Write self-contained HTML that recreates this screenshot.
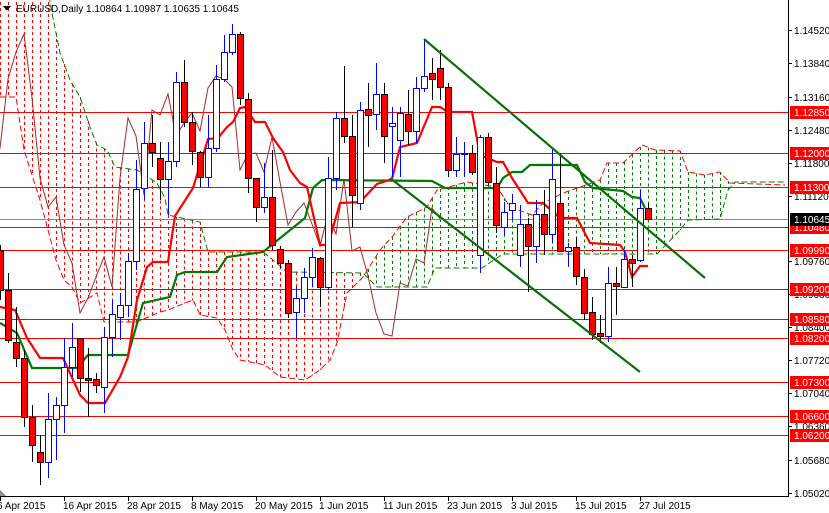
<!DOCTYPE html>
<html><head><meta charset="utf-8">
<style>
html,body{margin:0;padding:0;background:#fff;}
body{width:829px;height:513px;overflow:hidden;position:relative;font-family:"Liberation Sans",sans-serif;}
svg{position:absolute;left:0;top:0;}
text{font-family:"Liberation Sans",sans-serif;font-size:10px;}
</style></head><body>
<svg id="s" width="829" height="513" viewBox="0 0 829 513" xmlns="http://www.w3.org/2000/svg" shape-rendering="crispEdges">
<g id="cloud"></g>
<g id="hl"></g>
<g id="lines" shape-rendering="auto"></g>
<g id="candles"></g>
<g id="trend" shape-rendering="auto"></g>
<rect x="789" y="0" width="40" height="513" fill="#fff"/>
<rect x="0" y="497" width="829" height="16" fill="#fff"/>
<line x1="788.5" y1="0" x2="788.5" y2="497" stroke="#000"/>
<line x1="0" y1="496.5" x2="789" y2="496.5" stroke="#000"/>
<g id="axis"></g>
<polygon points="0,490 6,496 0,496" fill="#8a8f99"/>
<polygon points="3,6 11,6 7,11" fill="#000"/>
<text x="16" y="12" font-size="10.5" fill="#000">EURUSD,Daily  1.10864 1.10987 1.10635 1.10645</text>
</svg>
<script>
var NS="http://www.w3.org/2000/svg";
function el(p,t,a,txt){var e=document.createElementNS(NS,t);for(var k in a)e.setAttribute(k,a[k]);if(txt!==undefined)e.textContent=txt;document.getElementById(p).appendChild(e);return e;}
function pts(a){return a.map(function(p){return p[0]+","+p[1]}).join(" ");}
function interp(a,x){if(x<=a[0][0])return a[0][1];for(var i=1;i<a.length;i++){if(x<=a[i][0]){var t=(x-a[i-1][0])/(a[i][0]-a[i-1][0]);return a[i-1][1]+t*(a[i][1]-a[i-1][1]);}}return a[a.length-1][1];}
// candles: [open,close,high,low] in y pixels
var C=[[250,290,245,300],[290,340,273,343],[342,358,307,367],[358,417,350,427],[417,445,405,462],[452,462,435,485],[462,419,393,478],[419,405,397,460],[405,367,338,433],[367,347,323,377],
[338,378,338,392],[378,380,348,417],[379,385,373,393],[387,337,327,413],[337,314,300,357],[317,305,293,340],[305,261,253,317],[261,189,160,270],[188,143,122,200],[143,152,115,167],
[158,179,142,200],[179,161,142,215],[161,82,72,167],[82,122,60,127],[122,151,112,165],[152,177,151,187],[177,148,115,187],[148,79,65,152],[79,52,35,82],[52,34,24,55],
[34,98,32,105],[99,178,93,193],[178,207,178,222],[207,197,163,213],[197,245,150,250],[249,263,246,268],[263,313,260,318],[312,298,287,338],[298,277,268,313],[277,257,248,287],
[258,287,257,307],[287,178,157,290],[178,118,112,190],[118,136,66,143],[136,195,115,227],[203,110,102,210],[109,115,83,147],[114,94,63,130],[94,136,83,163],[126,123,107,177],
[140,113,107,177],[114,131,90,145],[131,88,77,143],[88,76,39,92],[73,79,58,100],[68,87,50,100],[87,170,83,177],[170,154,137,177],[154,153,142,177],[153,172,145,175],
[255,137,135,273],[137,182,133,185],[183,225,167,233],[227,212,202,235],[210,203,194,220],[255,224,205,267],[224,246,218,292],[246,214,200,263],[214,234,190,255],[234,179,148,243],
[203,251,153,251],[251,247,243,267],[247,276,237,285],[277,313,269,320],[312,334,297,340],[333,336,315,343],[336,283,267,342],[283,286,267,315],[287,259,250,288],[259,263,255,287],
[260,208,190,262],[208,219,203,220]];
// span A (red thin) and span B (green thin)
var A=[[0,97],[16,97],[24,150],[40,200],[56,260],[64,280],[72,287],[80,303],[97,293],[104,322],[137,322],[160,312],[168,310],[185,303],[193,300],[200,315],[217,318],[225,330],[233,350],[240,360],[265,365],[280,377],[305,380],[320,370],[330,360],[337,343],[347,293],[363,277],[380,250],[392,237],[407,217],[427,207],[437,190],[467,182],[497,187],[510,207],[532,215],[543,203],[563,193],[600,180],[607,163],[623,163],[642,145],[655,150],[680,151],[688,172],[705,175],[720,172],[730,183],[785,185]];
var B=[[0,-10],[48,-10],[52,13],[60,53],[70,80],[80,97],[90,127],[97,145],[107,150],[115,167],[137,170],[157,183],[165,198],[168,215],[200,222],[208,252],[263,252],[273,260],[287,272],[363,273],[377,287],[427,287],[435,268],[482,268],[503,254],[657,254],[680,230],[688,220],[720,219],[728,190],[735,182],[785,182]];
for(var x=0;x<=728;x+=8){var a=interp(A,x),b=interp(B,x);var g=a<b;el("cloud","line",{x1:x+0.5,x2:x+0.5,y1:Math.min(a,b),y2:Math.max(a,b),stroke:g?"#008000":"#f00","stroke-dasharray":"3,3"});}
el("lines","polyline",{points:pts(A),fill:"none",stroke:"#f00","stroke-width":1,"stroke-dasharray":"6,3"});
el("lines","polyline",{points:pts(B),fill:"none",stroke:"#008000","stroke-width":1,"stroke-dasharray":"6,3"});
// horizontal lines
[112,153,187,227,250,289,319,338,382,416,435].forEach(function(y){el("hl","line",{x1:0,x2:789,y1:y+0.5,y2:y+0.5,stroke:"#f00"});});
el("hl","line",{x1:0,x2:789,y1:219.5,y2:219.5,stroke:"#8a8a8a"});
// chikou
var ch=[];C.forEach(function(c,k){ch.push([k*8-208,c[1]]);});
el("lines","polyline",{points:pts(ch),fill:"none",stroke:"#a52a2a","stroke-width":1});
// kijun
var K=[[0,323],[17,333],[32,368],[77,368],[88,355],[128,355],[143,303],[170,297],[177,275],[185,272],[217,272],[227,257],[263,252],[305,218],[313,188],[322,180],[432,181],[445,188],[497,188],[503,178],[512,172],[522,172],[530,165],[577,165],[585,182],[593,188],[623,191],[632,197],[640,198],[645,208]];
el("lines","polyline",{points:pts(K),fill:"none",stroke:"#007a00","stroke-width":2.2});
var T=[[0,307],[15,310],[27,338],[40,358],[63,358],[80,395],[88,403],[105,403],[120,377],[128,357],[137,300],[147,267],[153,262],[168,262],[175,216],[193,188],[208,139],[218,138],[227,127],[233,122],[240,108],[245,107],[255,122],[265,122],[273,138],[283,152],[290,170],[300,183],[307,187],[320,245],[328,245],[340,203],[360,202],[377,184],[392,179],[400,147],[417,143],[432,107],[440,107],[448,112],[472,112],[480,155],[497,162],[503,162],[512,178],[528,203],[543,203],[560,218],[577,218],[590,243],[620,245],[625,252],[632,277],[640,266],[648,266]];
el("lines","polyline",{points:pts(T),fill:"none",stroke:"#f00","stroke-width":2.2});
// candles
C.forEach(function(c,k){var x=k*8;var bull=c[1]<c[0];var top=Math.min(c[0],c[1]),bot=Math.max(c[0],c[1]);
el("candles","line",{x1:x+0.5,x2:x+0.5,y1:c[2],y2:c[3],stroke:bull?"#00f":"#000"});
if(bot-top<1)bot=top+1;
el("candles","rect",{x:x-2.5,y:top+0.5,width:6,height:bot-top,fill:bull?"#fff":"#f00",stroke:bull?"#00f":"#000"});});
// trendlines
el("trend","line",{x1:424,y1:39,x2:705,y2:278,stroke:"#0b6e0b","stroke-width":2.2});
el("trend","line",{x1:390,y1:178,x2:640,y2:372,stroke:"#0b6e0b","stroke-width":2.2});
// axis
[["1.14520",30],["1.13840",63],["1.13160",97],["1.12480",130],["1.11800",163],["1.11120",196],["1.09760",261],["1.09080",294],["1.08400",327],["1.07720",360],["1.07040",393],["1.06360",426],["1.05680",460],["1.05020",493]].forEach(function(l){
el("axis","line",{x1:789,x2:792,y1:l[1]+0.5,y2:l[1]+0.5,stroke:"#000"});el("axis","text",{x:794,y:l[1]+4,fill:"#000"},l[0]);});
[["1.12850",112],["1.12000",153],["1.11300",187],["1.10480",227],["1.09990",250],["1.09200",289],["1.08580",319],["1.08200",338],["1.07300",382],["1.06600",416],["1.06200",435]].forEach(function(l){
el("axis","rect",{x:790,y:l[1]-6,width:39,height:13,fill:"#f00"});el("axis","text",{x:794,y:l[1]+4,fill:"#fff"},l[0]);});
el("axis","rect",{x:790,y:213,width:39,height:13,fill:"#000"});el("axis","text",{x:794,y:223,fill:"#fff"},"1.10645");
var D=["6 Apr 2015","16 Apr 2015","28 Apr 2015","8 May 2015","20 May 2015","1 Jun 2015","11 Jun 2015","23 Jun 2015","3 Jul 2015","15 Jul 2015","27 Jul 2015"];
D.forEach(function(d,i){var x=i*64;el("axis","line",{x1:x+0.5,x2:x+0.5,y1:497,y2:501,stroke:"#000"});el("axis","text",{x:i==0?-3:x-1,y:509,fill:"#000"},d);});
</script>
</body></html>
